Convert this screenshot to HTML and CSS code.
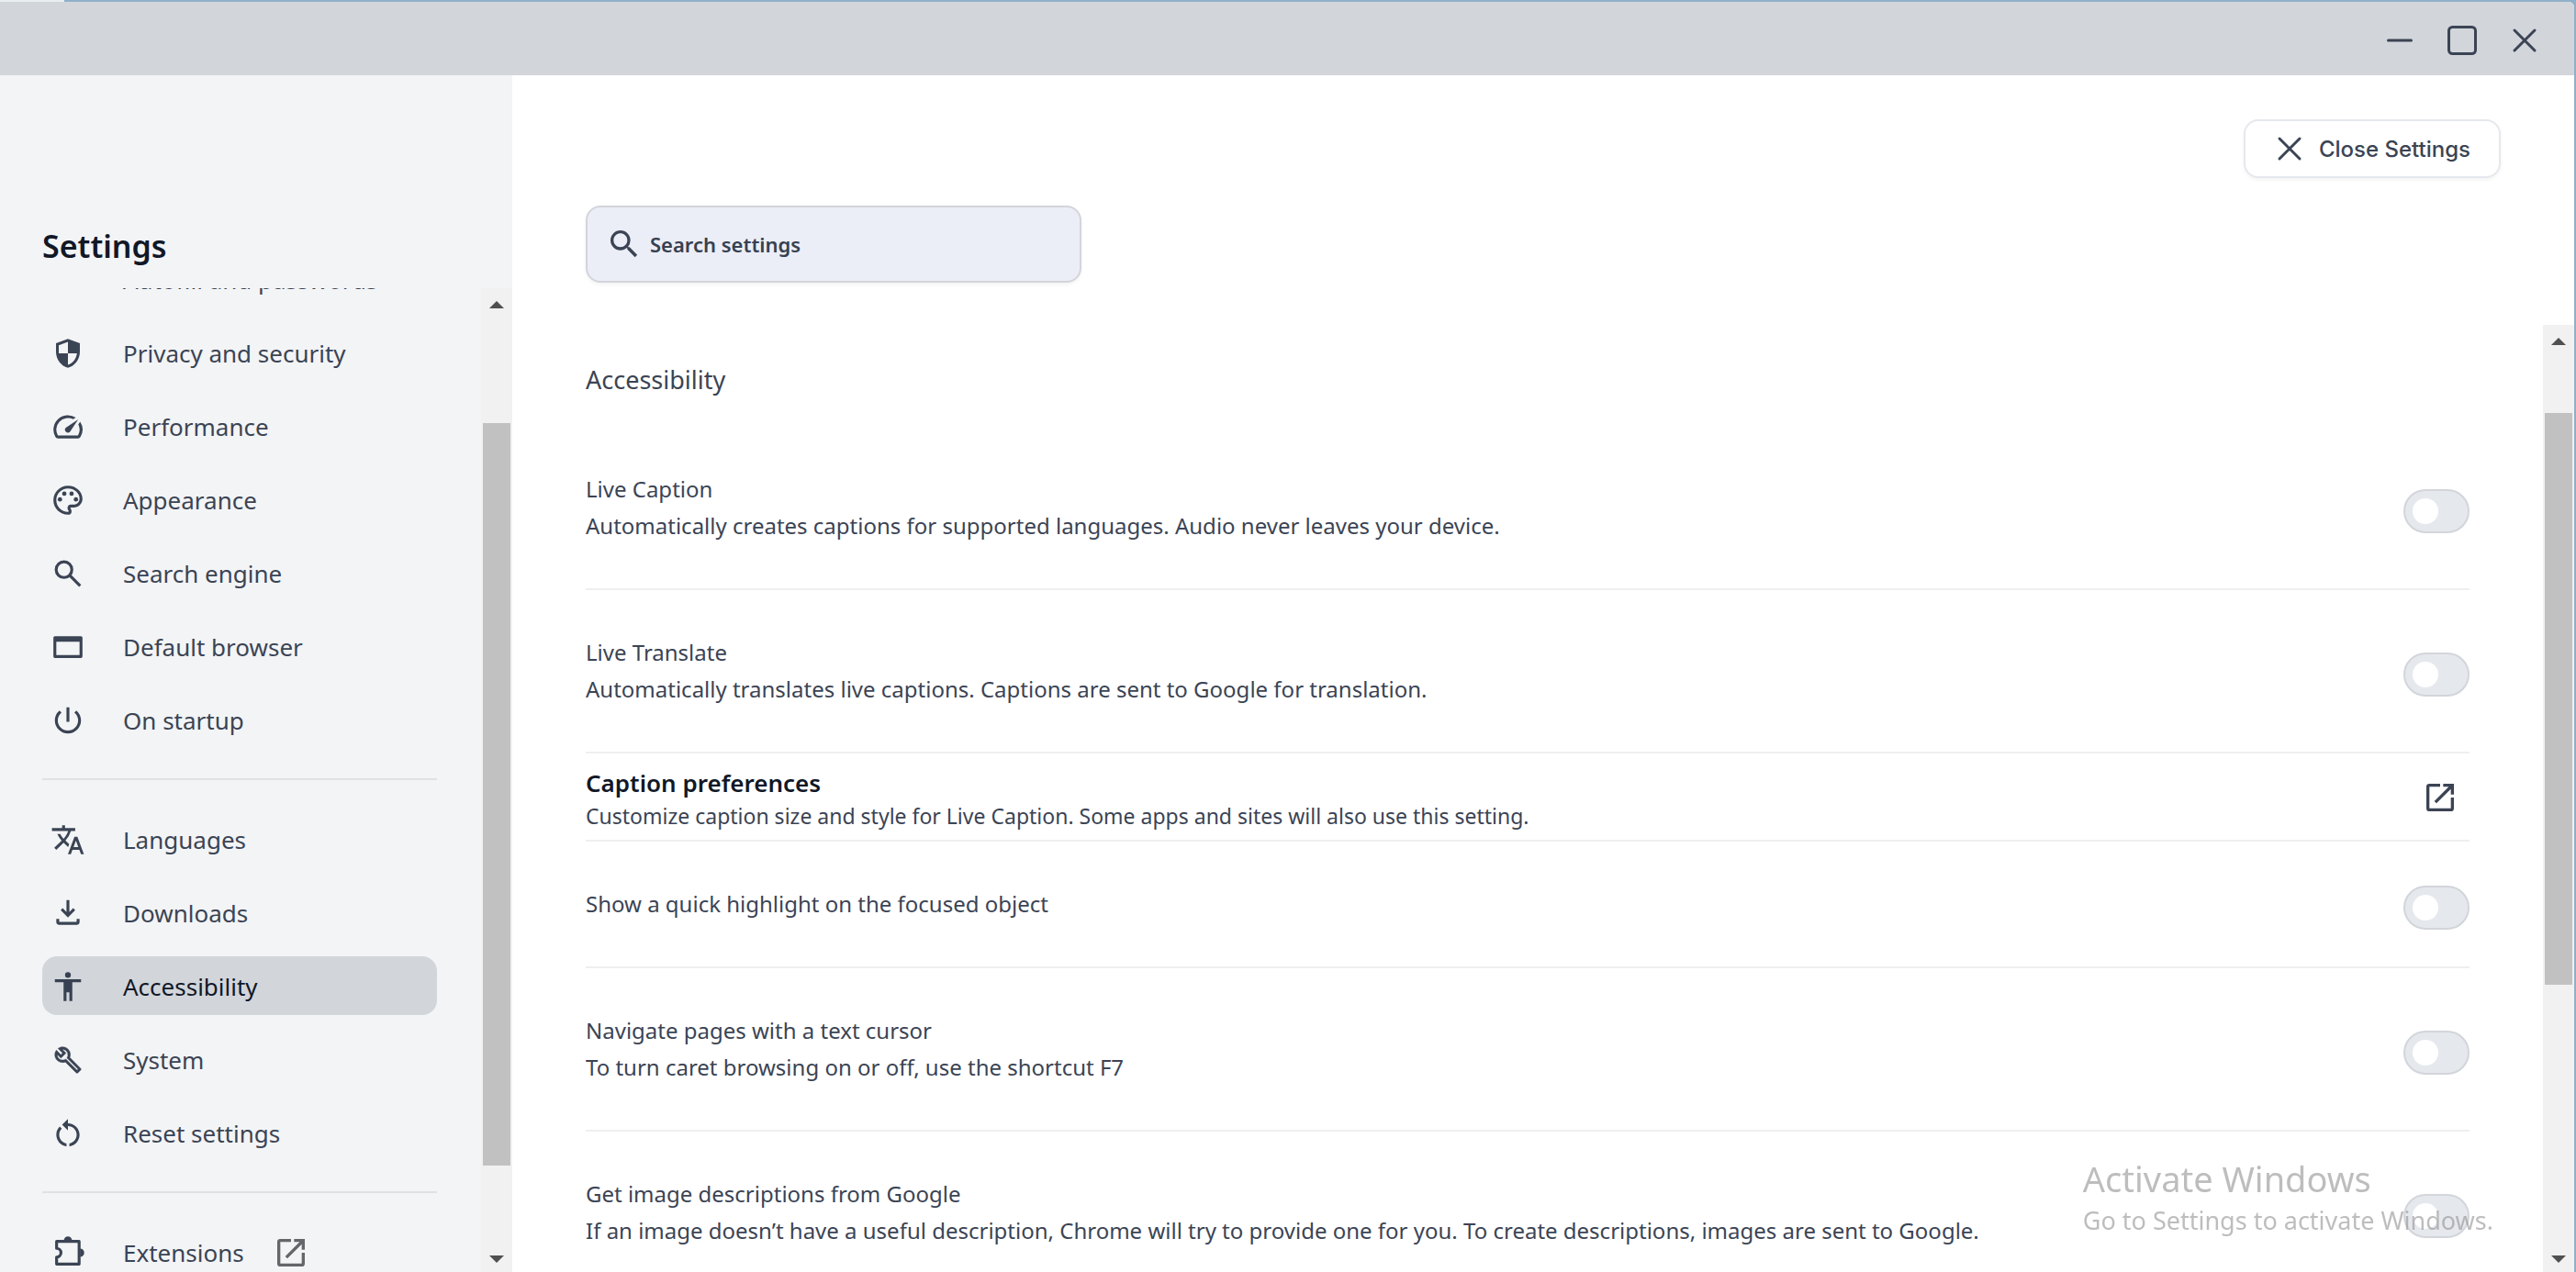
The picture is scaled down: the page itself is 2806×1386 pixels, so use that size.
FILE: index.html
```html
<!DOCTYPE html>
<html lang="en">
<head>
  <meta charset="UTF-8">
  <meta name="viewport" content="width=device-width, initial-scale=1.0">
  <title>Settings - Accessibility</title>
  <link rel="stylesheet" href="styles.css">
</head>
<body>
  <svg class="sprite" aria-hidden="true">
    <symbol id="close" viewBox="0 0 40 40">
      <path d="M9 9l22 22M31 9L9 31" fill="none" stroke="currentColor" stroke-width="3" stroke-linecap="round"/>
    </symbol>
    <symbol id="search" viewBox="0 0 24 24">
      <path d="M15.5 14h-.79l-.28-.27A6.471 6.471 0 0 0 16 9.5 6.5 6.5 0 1 0 9.5 16c1.61 0 3.09-.59 4.23-1.57l.27.28v.79l5 4.99L20.49 19l-4.99-5zm-6 0C7.01 14 5 11.99 5 9.5S7.01 5 9.5 5 14 7.01 14 9.5 11.99 14 9.5 14z"/>
    </symbol>
    <symbol id="open" viewBox="0 0 24 24">
      <path d="M5 3h7v2H5v14h14v-7h2v7a2 2 0 0 1-2 2H5a2 2 0 0 1-2-2V5a2 2 0 0 1 2-2z"/>
      <path d="M14 3h7v7h-2V6.4L9.6 15.8l-1.4-1.4L17.6 5H14z"/>
    </symbol>
    <symbol id="arrow-up" viewBox="0 0 16 8"><path d="M8 0l8 8H0z"/></symbol>
    <symbol id="arrow-down" viewBox="0 0 16 8"><path d="M0 0h16L8 8z"/></symbol>
  </svg>

  <div class="window">
    <header class="titlebar">
      <button class="window-button" aria-label="Minimize">
        <svg viewBox="0 0 40 40"><path d="M7.500 20h25" fill="none" stroke="currentColor" stroke-width="3" stroke-linecap="round"/></svg>
      </button>
      <button class="window-button" aria-label="Maximize">
        <svg viewBox="0 0 40 40"><rect x="5.500" y="5.500" width="29" height="29" rx="4" fill="none" stroke="currentColor" stroke-width="3"/></svg>
      </button>
      <button class="window-button" aria-label="Close"><svg><use href="#close"/></svg></button>
    </header>

    <div class="content">
      <aside class="sidebar">
        <h1>Settings</h1>
        <div class="scroll-area">
          <nav class="nav">
            <ul class="nav-list">
              <li><a class="nav-link" href="#autofill">
                <svg viewBox="0 0 24 24"><path d="M11.500 10A5 5 0 1 0 11.500 14H16v3h4v-3h2v-4zM7 14a2 2 0 1 1 0-4 2 2 0 0 1 0 4z"/></svg>
                Autofill and passwords</a></li>
              <li><a class="nav-link" href="#privacy">
                <svg viewBox="0 0 24 24"><path fill-rule="evenodd" d="M12 2L3.800 5v6.090C3.800 16.140 7.300 20.850 12 22c4.700-1.150 8.200-5.860 8.200-10.910V5zM12 4.100V12H5.700V6.400zM12 12h6.200c-.5 3.800-2.900 7-6.200 7.900z"/></svg>
                Privacy and security</a></li>
              <li><a class="nav-link" href="#performance">
                <svg viewBox="0 0 24 24"><path d="M20.38 8.57l-1.23 1.85a8 8 0 0 1-.22 7.58H5.07A8 8 0 0 1 15.58 6.85l1.85-1.23A10 10 0 0 0 3.350 19a2 2 0 0 0 1.720 1h13.850a2 2 0 0 0 1.740-1 10 10 0 0 0-.27-10.440zm-9.790 6.840a2 2 0 0 0 2.830 0l5.660-8.490-8.490 5.660a2 2 0 0 0 0 2.830z"/></svg>
                Performance</a></li>
              <li><a class="nav-link" href="#appearance">
                <svg viewBox="0 0 24 24"><path d="M12 22C6.490 22 2 17.510 2 12S6.490 2 12 2s10 4.040 10 9c0 3.310-2.690 6-6 6h-1.770c-.28 0-.5.22-.5.5 0 .12.05.23.13.33.41.47.64 1.060.64 1.670A2.500 2.500 0 0 1 12 22zm0-18c-4.410 0-8 3.590-8 8s3.590 8 8 8c.28 0 .5-.22.5-.5a.54.54 0 0 0-.14-.35c-.41-.46-.63-1.050-.63-1.650a2.500 2.500 0 0 1 2.500-2.500H16c2.210 0 4-1.790 4-4 0-3.860-3.590-7-8-7z"/><circle cx="6.500" cy="11.500" r="1.500"/><circle cx="9.500" cy="7.500" r="1.500"/><circle cx="14.500" cy="7.500" r="1.500"/><circle cx="17.500" cy="11.500" r="1.500"/></svg>
                Appearance</a></li>
              <li><a class="nav-link" href="#search-engine">
                <svg viewBox="0 0 24 24"><g fill="none" stroke="currentColor" stroke-width="2"><circle cx="9.300" cy="9.300" r="5.400"/><path d="M13.200 13.200l7.200 7.200"/></g></svg>
                Search engine</a></li>
              <li><a class="nav-link" href="#browser">
                <svg viewBox="0 0 24 24"><path fill-rule="evenodd" d="M3 4.500h18a1 1 0 0 1 1 1v13a1 1 0 0 1-1 1H3a1 1 0 0 1-1-1v-13a1 1 0 0 1 1-1zM4 8.300v9.300h16V8.300z"/></svg>
                Default browser</a></li>
              <li><a class="nav-link" href="#startup">
                <svg viewBox="0 0 24 24"><path d="M13 3h-2v10h2V3zm4.830 2.170l-1.420 1.420A6.920 6.920 0 0 1 19 12c0 3.870-3.130 7-7 7s-7-3.130-7-7c0-2.190 1.020-4.140 2.580-5.420L6.170 5.170A8.932 8.932 0 0 0 3 12a9 9 0 0 0 18 0c0-2.740-1.230-5.180-3.170-6.830z"/></svg>
                On startup</a></li>
            </ul>
            <hr>
            <ul class="nav-list">
              <li><a class="nav-link" href="#languages">
                <svg viewBox="0 0 24 24"><path d="M12.870 15.070l-2.540-2.510.03-.03A17.520 17.520 0 0 0 14.070 6H17V4h-7V2H8v2H1v1.990h11.170C11.500 7.920 10.440 9.750 9 11.350 8.070 10.320 7.300 9.190 6.690 8h-2c.73 1.630 1.730 3.170 2.980 4.560l-5.090 5.020L4 19l5-5 3.110 3.110.76-2.040zM18.500 10h-2L12 22h2l1.120-3h4.750L21 22h2l-4.500-12zm-2.620 7l1.620-4.330L19.120 17h-3.240z"/></svg>
                Languages</a></li>
              <li><a class="nav-link" href="#downloads">
                <svg viewBox="0 0 24 24"><path d="M11 3h2v8.200l2.600-2.600L17 10l-5 5-5-5 1.400-1.400 2.600 2.600zM4 16h2v2h12v-2h2v2a2 2 0 0 1-2 2H6a2 2 0 0 1-2-2z"/></svg>
                Downloads</a></li>
              <li><a class="nav-link active" href="#accessibility" aria-current="page">
                <svg viewBox="0 0 24 24"><path d="M12 2a2 2 0 1 1 0 4 2 2 0 0 1 0-4zm9 7h-6v13h-2v-6h-2v6H9V9H3V7h18v2z"/></svg>
                Accessibility</a></li>
              <li><a class="nav-link" href="#system">
                <svg viewBox="0 0 24 24"><path transform="translate(2.200 2.200) scale(.82)" stroke="currentColor" stroke-width=".4" d="M22.610 18.990l-9.080-9.080c.93-2.340.45-5.100-1.440-7C9.790.61 6.210.4 3.660 2.260L7.500 6.110 6.080 7.520 2.250 3.690C.39 6.230.6 9.820 2.900 12.110c1.860 1.860 4.570 2.350 6.890 1.480l9.110 9.110c.39.39 1.020.39 1.410 0l2.300-2.300c.4-.38.4-1.010 0-1.410zm-3 1.600l-9.460-9.460c-.61.45-1.290.72-2 .82-1.360.2-2.790-.21-3.830-1.250C3.370 9.760 2.930 8.500 3 7.260l3.090 3.090 4.240-4.240-3.090-3.090c1.240-.07 2.490.37 3.440 1.310a4.469 4.469 0 0 1 1.240 3.960 4.350 4.350 0 0 1-.81 1.910l9.450 9.450-.95.94z"/></svg>
                System</a></li>
              <li><a class="nav-link" href="#reset">
                <svg viewBox="0 0 24 24"><path d="M12 5V2L8 6l4 4V7c3.310 0 6 2.690 6 6 0 2.970-2.170 5.430-5 5.910v2.020c3.950-.49 7-3.850 7-7.930 0-4.420-3.580-8-8-8zm-6 8c0-1.650.67-3.150 1.760-4.240L6.340 7.340A8.014 8.014 0 0 0 4 13c0 4.080 3.050 7.440 7 7.930v-2.020c-2.830-.48-5-2.940-5-5.910z"/></svg>
                Reset settings</a></li>
            </ul>
            <hr>
            <ul class="nav-list">
              <li><a class="nav-link" href="#extensions">
                <svg viewBox="0 0 24 24"><path d="M4.200 4.200h15.500v15.600H4.200V15a3 3 0 0 0 0-6z" fill="none" stroke="currentColor" stroke-width="2" stroke-linejoin="round"/><path d="M9.200 3.600a2.800 2.800 0 0 1 5.600 0zM20.400 9.200a2.800 2.800 0 0 1 0 5.600z"/></svg>
                Extensions
                <svg class="external"><use href="#open"/></svg></a></li>
            </ul>
          </nav>
          <div class="scrollbar" aria-hidden="true">
            <svg><use href="#arrow-up"/></svg>
            <div class="thumb sidebar-thumb"></div>
            <svg><use href="#arrow-down"/></svg>
          </div>
        </div>
      </aside>

      <main class="main">
        <div class="toolbar">
          <button class="close-button"><svg><use href="#close"/></svg>Close Settings</button>
          <label class="search">
            <svg><use href="#search"/></svg>
            <input type="search" placeholder="Search settings" aria-label="Search settings">
          </label>
        </div>
        <div class="scroll-area">
          <section class="settings">
            <h2>Accessibility</h2>
            <div class="row">
              <label for="caption">Live Caption<br>Automatically creates captions for supported languages. Audio never leaves your device.</label>
              <input type="checkbox" class="toggle" id="caption">
            </div>
            <div class="row">
              <label for="translate">Live Translate<br>Automatically translates live captions. Captions are sent to Google for translation.</label>
              <input type="checkbox" class="toggle" id="translate">
            </div>
            <a class="row link-row" href="#caption-preferences">
              <div>
                <h3>Caption preferences</h3>
                <p>Customize caption size and style for Live Caption. Some apps and sites will also use this setting.</p>
              </div>
              <svg><use href="#open"/></svg>
            </a>
            <div class="row">
              <label for="highlight">Show a quick highlight on the focused object</label>
              <input type="checkbox" class="toggle" id="highlight">
            </div>
            <div class="row">
              <label for="cursor">Navigate pages with a text cursor<br>To turn caret browsing on or off, use the shortcut F7</label>
              <input type="checkbox" class="toggle" id="cursor">
            </div>
            <div class="row">
              <label for="images">Get image descriptions from Google<br>If an image doesn’t have a useful description, Chrome will try to provide one for you. To create descriptions, images are sent to Google.</label>
              <input type="checkbox" class="toggle" id="images">
            </div>
          </section>
          <div class="scrollbar" aria-hidden="true">
            <svg><use href="#arrow-up"/></svg>
            <div class="thumb main-thumb"></div>
            <svg><use href="#arrow-down"/></svg>
          </div>
        </div>
      </main>
    </div>
  </div>

  <div class="watermark">
    <p class="watermark-title">Activate Windows</p>
    <p>Go to Settings to activate Windows.</p>
  </div>
</body>
</html>
```
FILE: styles.css
```css
* {
  box-sizing: border-box;
}

body {
  margin: 0;
  height: 100vh;
  overflow: hidden;
  padding: 2px 2px 0 0;
  font-family: "Noto Sans", "Open Sans", sans-serif;
  color: #3b4454;
  background: linear-gradient(90deg, #e9eef0 70px, #8fb0ca 70px);
}

h1, h2, h3, p, ul {
  margin: 0;
  padding: 0;
}

svg {
  display: block;
  flex: none;
  width: 40px;
  height: 40px;
  fill: currentColor;
}

.sprite {
  display: none;
}

button {
  font: inherit;
  color: inherit;
  cursor: pointer;
}

.window {
  display: flex;
  flex-direction: column;
  height: 100%;
  overflow: hidden;
  border-top-right-radius: 6px;
  background: #fff;
}

.titlebar {
  display: flex;
  flex: none;
  justify-content: flex-end;
  height: 80px;
  padding: 4px 20px 0 0;
  background: #d2d5da;
}

.window-button {
  display: flex;
  align-items: center;
  justify-content: center;
  width: 68px;
  padding: 0;
  border: none;
  background: none;
}

.content {
  display: flex;
  flex: 1;
  min-height: 0;
}

/* Sidebar */

.sidebar {
  display: flex;
  flex-direction: column;
  flex: none;
  width: 558px;
  background: #f3f4f6;
}

.sidebar h1 {
  padding: 162px 46px 22px;
  font-size: 34px;
  font-weight: 600;
  line-height: 48px;
  color: #111827;
}

.scroll-area {
  display: flex;
  flex: 1;
  min-height: 0;
  overflow: hidden;
}

.nav {
  flex: 1;
  padding: 0 48px 0 46px;
  margin-top: -42px;
}

.nav-list {
  display: flex;
  flex-direction: column;
  gap: 16px;
  list-style: none;
}

.nav hr {
  height: 2px;
  margin: 32px 0;
  border: none;
  background: #dfe1e4;
}

.nav-link {
  display: flex;
  align-items: center;
  gap: 41px;
  height: 64px;
  padding: 2px 9px 0;
  border-radius: 16px;
  font-size: 26px;
  line-height: 62px;
  color: #3b4454;
  text-decoration: none;
}

.nav-link svg {
  width: 38px;
  height: 38px;
}

.nav-link .external {
  width: 40px;
  height: 40px;
  margin-left: -10px;
  color: #65656a;
}

.nav-link.active {
  color: #111827;
  background: #d2d5da;
}

.nav-link.active svg {
  color: #374151;
}

/* Scrollbars */

.scrollbar {
  display: flex;
  flex-direction: column;
  flex: none;
  align-items: center;
  width: 34px;
  padding: 14px 0 10px;
  color: #505050;
  background: #f1f1f1;
}

.scrollbar svg {
  width: 16px;
  height: 8px;
}

.thumb {
  flex: 1;
  width: 30px;
  background: #c1c1c1;
}

.sidebar-thumb {
  margin: 125px 0 98px;
}

.main-thumb {
  margin: 74px 0 295px;
}

/* Main panel */

.main {
  display: flex;
  flex-direction: column;
  flex: 1;
  min-width: 0;
}

.toolbar {
  display: flex;
  flex-direction: column;
  gap: 30px;
  padding: 48px 80px 46px;
}

.close-button {
  display: flex;
  align-items: center;
  align-self: flex-end;
  gap: 12px;
  height: 64px;
  padding: 0 31px 0 28px;
  border: 2px solid #e5e8ed;
  border-radius: 16px;
  font-family: Inter, sans-serif;
  font-size: 24px;
  font-weight: 500;
  background: #fff;
  box-shadow: 0 2px 4px rgba(0, 0, 0, 0.05);
}

.search {
  display: flex;
  align-items: center;
  gap: 8px;
  width: 540px;
  height: 84px;
  padding: 0 20px;
  border: 2px solid #d2d5da;
  border-radius: 16px;
  background: #eceef7;
  box-shadow: 0 2px 4px rgba(0, 0, 0, 0.05);
}

.search input {
  flex: 1;
  min-width: 0;
  height: 40px;
  padding: 0;
  border: none;
  outline: none;
  font: 600 22px "Noto Sans", sans-serif;
  color: #374151;
  background: none;
}

.search input::placeholder {
  color: #374151;
}

.settings {
  flex: 1;
  min-width: 0;
  padding: 40px 80px 0;
}

.settings h2 {
  margin-bottom: 31px;
  font-size: 27px;
  font-weight: 400;
  line-height: 40px;
}

.row {
  display: flex;
  align-items: center;
  justify-content: space-between;
  padding: 48px 0;
  border-bottom: 2px solid #efeff0;
  font-size: 24px;
  line-height: 40px;
  color: inherit;
  text-decoration: none;
}

.link-row {
  padding: 12px 12px 10px 0;
}

.link-row h3 {
  font-size: 26px;
  font-weight: 600;
  color: #111827;
}

.link-row p {
  font-size: 23px;
  line-height: 32px;
}

.toggle {
  appearance: none;
  flex: none;
  width: 72px;
  height: 48px;
  margin: 0 0 -8px;
  padding: 8px;
  border: 2px solid #d2d5da;
  border-radius: 24px;
  background: #e5e8ed;
  cursor: pointer;
}

.toggle::before {
  content: "";
  display: block;
  width: 28px;
  height: 28px;
  border-radius: 50%;
  background: #fff;
}

.toggle:checked {
  padding-left: 32px;
  background: #374151;
}

/* Activation notice sits over everything */

.watermark {
  position: fixed;
  right: 90px;
  bottom: 34px;
  font-size: 27px;
  line-height: 44px;
  color: rgba(145, 145, 145, 0.6);
  pointer-events: none;
}

.watermark-title {
  font-size: 38px;
  line-height: 48px;
}
```
